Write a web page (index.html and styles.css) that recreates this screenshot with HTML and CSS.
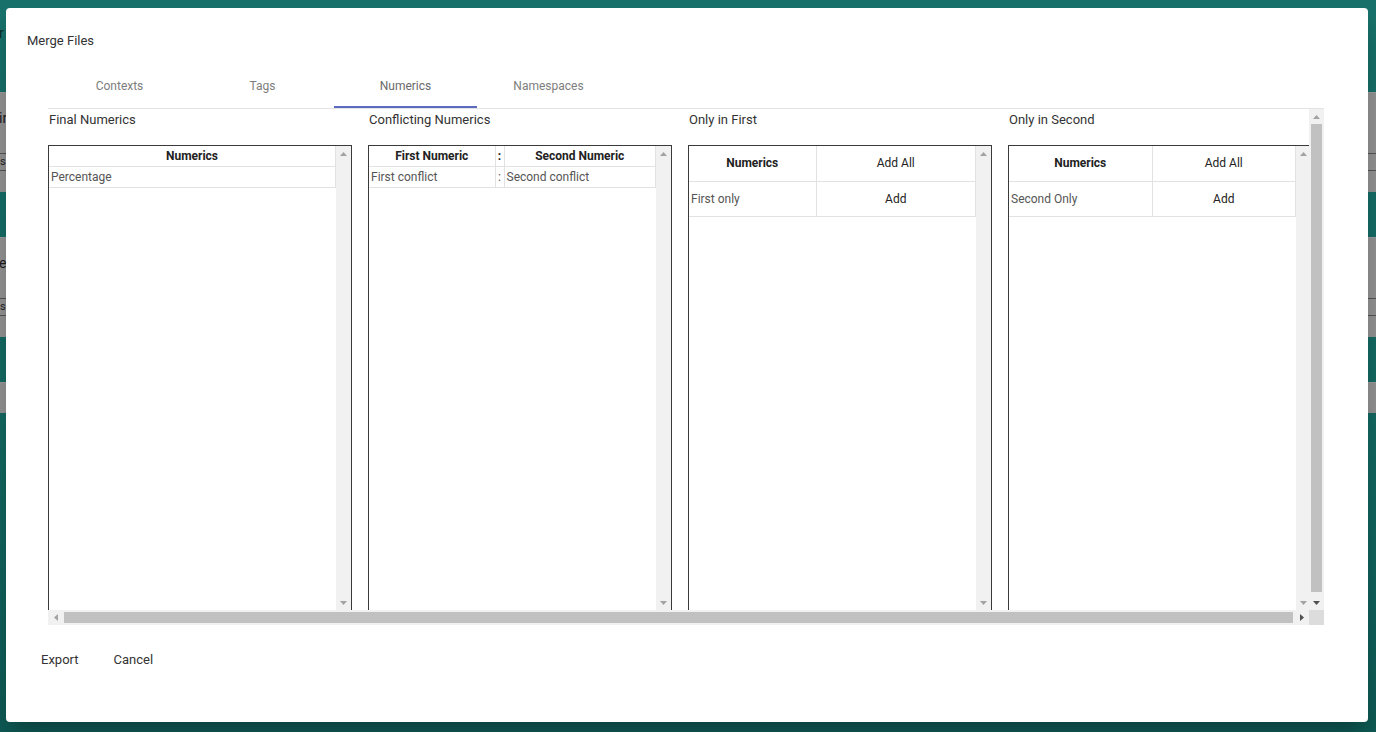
FILE: index.html
```html
<!DOCTYPE html>
<html lang="en">
<head>
<meta charset="utf-8">
<title>Merge Files</title>
<link rel="stylesheet" href="styles.css">
</head>
<body>
<div class="page">
  <div class="app">
    <div class="gap gap-top"><span class="frag frag-top">r</span></div>
    <div class="band band-1">
      <span class="frag frag-label">ir</span>
      <div class="frag-field"><span>s</span></div>
    </div>
    <div class="gap gap-mid"></div>
    <div class="band band-2">
      <span class="frag frag-label">e</span>
      <div class="frag-field"><span>s</span></div>
    </div>
    <div class="gap gap-mid"></div>
    <div class="band band-3"></div>
  </div>

  <div class="dialog">
    <h2 class="dialog-title">Merge Files</h2>

    <div class="tabs">
      <div class="tab">Contexts</div>
      <div class="tab">Tags</div>
      <div class="tab tab-active">Numerics</div>
      <div class="tab">Namespaces</div>
    </div>

    <div class="scroller">
      <div class="viewport">
        <div class="columns">
          <section class="column">
            <div class="column-title">Final Numerics</div>
            <div class="box">
              <div class="table-wrap">
                <table class="grid grid-small">
                  <tr><th class="c-full">Numerics</th></tr>
                  <tr><td>Percentage</td></tr>
                </table>
              </div>
              <div class="mini-bar">
                <div class="arrow"><svg width="7" height="4" viewBox="0 0 7 4"><polygon points="0,4 3.5,0 7,4" /></svg></div>
                <div class="mini-track"></div>
                <div class="arrow"><svg width="7" height="4" viewBox="0 0 7 4"><polygon points="0,0 3.5,4 7,0" /></svg></div>
              </div>
            </div>
          </section>

          <section class="column">
            <div class="column-title">Conflicting Numerics</div>
            <div class="box">
              <div class="table-wrap">
                <table class="grid grid-small">
                  <tr><th class="c-first">First Numeric</th><th class="c-sep">:</th><th class="c-second">Second Numeric</th></tr>
                  <tr><td>First conflict</td><td class="sep">:</td><td>Second conflict</td></tr>
                </table>
              </div>
              <div class="mini-bar">
                <div class="arrow"><svg width="7" height="4" viewBox="0 0 7 4"><polygon points="0,4 3.5,0 7,4" /></svg></div>
                <div class="mini-track"></div>
                <div class="arrow"><svg width="7" height="4" viewBox="0 0 7 4"><polygon points="0,0 3.5,4 7,0" /></svg></div>
              </div>
            </div>
          </section>

          <section class="column">
            <div class="column-title">Only in First</div>
            <div class="box">
              <div class="table-wrap">
                <table class="grid grid-tall">
                  <tr><th class="c-a1">Numerics</th><td class="btn-cell c-b1">Add All</td></tr>
                  <tr><td>First only</td><td class="btn-cell">Add</td></tr>
                </table>
              </div>
              <div class="mini-bar">
                <div class="arrow"><svg width="7" height="4" viewBox="0 0 7 4"><polygon points="0,4 3.5,0 7,4" /></svg></div>
                <div class="mini-track"></div>
                <div class="arrow"><svg width="7" height="4" viewBox="0 0 7 4"><polygon points="0,0 3.5,4 7,0" /></svg></div>
              </div>
            </div>
          </section>

          <section class="column">
            <div class="column-title">Only in Second</div>
            <div class="box">
              <div class="table-wrap">
                <table class="grid grid-tall">
                  <tr><th class="c-a2">Numerics</th><td class="btn-cell c-b2">Add All</td></tr>
                  <tr><td>Second Only</td><td class="btn-cell">Add</td></tr>
                </table>
              </div>
              <div class="mini-bar">
                <div class="arrow"><svg width="7" height="4" viewBox="0 0 7 4"><polygon points="0,4 3.5,0 7,4" /></svg></div>
                <div class="mini-track"></div>
                <div class="arrow"><svg width="7" height="4" viewBox="0 0 7 4"><polygon points="0,0 3.5,4 7,0" /></svg></div>
              </div>
            </div>
          </section>
        </div>
      </div>

      <div class="vbar">
        <div class="arrow"><svg width="7" height="4" viewBox="0 0 7 4"><polygon points="0,4 3.5,0 7,4" /></svg></div>
        <div class="vthumb"></div>
        <div class="arrow arrow-dark"><svg width="7" height="4" viewBox="0 0 7 4"><polygon points="0,0 3.5,4 7,0" /></svg></div>
      </div>

      <div class="hbar">
        <div class="arrow"><svg width="4" height="7" viewBox="0 0 4 7"><polygon points="4,0 0,3.5 4,7" /></svg></div>
        <div class="hthumb"></div>
        <div class="arrow arrow-dark"><svg width="4" height="7" viewBox="0 0 4 7"><polygon points="0,0 4,3.5 0,7" /></svg></div>
      </div>

      <div class="corner"></div>
    </div>

    <div class="actions">
      <button class="text-btn">Export</button>
      <button class="text-btn">Cancel</button>
    </div>
  </div>
</div>
</body>
</html>
```

FILE: styles.css
```css
* { box-sizing: border-box; }

html, body {
  margin: 0;
  padding: 0;
}

body {
  font-family: Roboto, "Liberation Sans", Arial, sans-serif;
  color: #333;
}

.page {
  position: relative;
  width: 1376px;
  height: 732px;
  overflow: hidden;
  background: linear-gradient(180deg, #18726b 0%, #146a63 55%, #0f5b56 100%);
}

/* dimmed application behind the dialog */
.app {
  display: flex;
  flex-direction: column;
}

.gap-top { height: 92px; padding-top: 25px; }
.gap-mid { height: 45px; }

.band {
  background: #949494;
  border-top: 1px solid #9e9e9e;
}

.band-1, .band-2 { height: 100px; padding-top: 17px; }
.band-3 { height: 31px; }

.frag {
  display: block;
  font-size: 14px;
  line-height: 16px;
  color: #1c1c1c;
  margin-left: -1px;
}

.frag-top { color: #0c2b28; }

.frag-field {
  margin-top: 27px;
  height: 18px;
  border-top: 1px solid #555;
  border-bottom: 1px solid #555;
  font-size: 11px;
  line-height: 16px;
  color: #222;
}

/* dialog */
.dialog {
  position: absolute;
  left: 6px;
  top: 8px;
  width: 1362px;
  height: 714px;
  background: #fff;
  border-radius: 4px;
  box-shadow: 0 11px 15px -7px rgba(0,0,0,0.2), 0 24px 38px 3px rgba(0,0,0,0.14);
  display: flex;
  flex-direction: column;
}

.dialog-title {
  margin: 23px 0 0 21px;
  font-size: 13px;
  line-height: 20px;
  font-weight: 400;
  color: #333;
}

.tabs {
  display: flex;
  margin: 13px 0 0 42px;
  width: 1276px;
  height: 45px;
  border-bottom: 1px solid #e3e3e3;
}

.tab {
  width: 143px;
  height: 44px;
  display: flex;
  align-items: center;
  justify-content: center;
  padding-top: 0;
  font-size: 12px;
  color: #7d7d7d;
}

.tab-active {
  border-bottom: 2px solid #5c6bc0;
  padding-top: 2px;
  color: #6a6a6a;
}

/* scroll area */
.scroller {
  margin-left: 42px;
  width: 1276px;
  height: 516px;
  display: grid;
  grid-template-columns: 1261px 15px;
  grid-template-rows: 501px 15px;
}

.viewport {
  overflow: hidden;
}

.columns {
  display: flex;
  gap: 16px;
  width: 1264px;
}

.column {
  width: 304px;
  flex: 0 0 304px;
}

.column-title {
  font-size: 13px;
  line-height: 20px;
  color: #333;
  padding-top: 1px;
  margin-bottom: 15px;
  padding-left: 1px;
}

.box {
  height: 470px;
  border: 1px solid #3a3a3a;
  display: flex;
  align-items: flex-start;
}

.table-wrap {
  flex: 1;
}

.grid {
  width: 100%;
  border-collapse: collapse;
  font-size: 12px;
  table-layout: fixed;
}

.grid th, .grid td {
  border-right: 1px solid #e2e2e2;
  border-bottom: 1px solid #e2e2e2;
  padding: 0 0 0 2px;
  text-align: left;
  color: #555;
  font-weight: 400;
  white-space: nowrap;
}

.grid th {
  text-align: center;
  font-weight: 700;
  color: #222;
  padding: 0;
}

.grid-small th, .grid-small td {
  height: 20px;
  line-height: 18px;
}

.grid-small tr + tr td {
  height: 21px;
  padding-top: 1px;
}

.c-first { width: 126px; }
.c-sep { width: 9px; }
.grid td.sep { padding: 1px 0 0 0; text-align: center; }

.grid-tall th, .grid-tall td {
  height: 35px;
}

.c-a1 { width: 127px; }
.c-a2 { width: 143px; }

.grid td.btn-cell {
  text-align: center;
  font-weight: 400;
  color: #222;
  padding: 0;
}

/* scrollbars */
.arrow {
  width: 15px;
  height: 15px;
  flex: 0 0 15px;
  display: flex;
  align-items: center;
  justify-content: center;
}

.arrow svg { display: block; fill: #a3a3a3; }
.arrow-dark svg { fill: #505050; }

.mini-bar {
  width: 15px;
  flex: 0 0 15px;
  height: 464px;
  background: #f1f1f1;
  display: flex;
  flex-direction: column;
}

.mini-track { flex: 1; }

.vbar {
  background: #f1f1f1;
  display: flex;
  flex-direction: column;
}

.vthumb {
  flex: 1;
  margin: 0 2px 3px 2px;
  background: #c1c1c1;
}

.hbar {
  background: #f1f1f1;
  display: flex;
}

.hthumb {
  flex: 1;
  margin: 2px 1px;
  background: #c1c1c1;
}

.corner {
  background: #dcdcdc;
}

/* actions */
.actions {
  display: flex;
  gap: 19px;
  margin: 17px 0 0 27px;
}

.text-btn {
  font-family: Roboto, "Liberation Sans", Arial, sans-serif;
  font-size: 13px;
  line-height: 20px;
  color: #333;
  background: none;
  border: 0;
  padding: 8px 8px;
  cursor: pointer;
}
```
